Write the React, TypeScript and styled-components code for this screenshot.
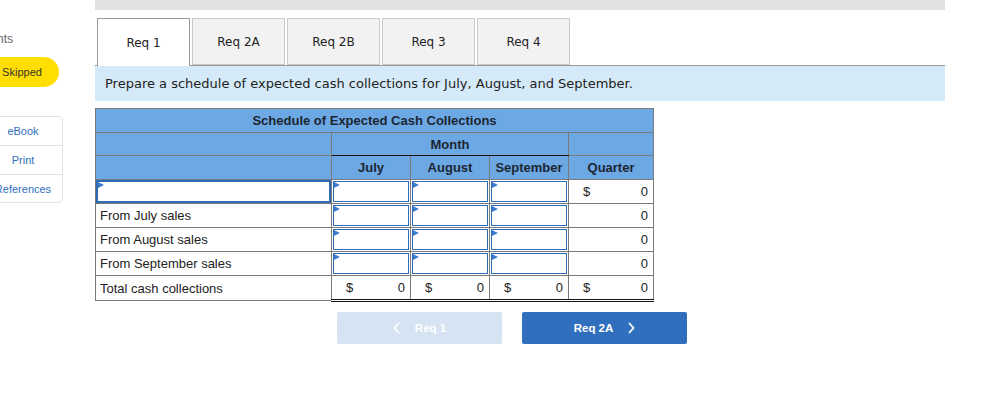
import React from 'react'
import styled, { createGlobalStyle } from 'styled-components'

const GlobalStyle = createGlobalStyle`
  html, body {
    margin: 0;
    padding: 0;
    background: #fff;
    overflow: hidden;
  }
  body {
    font-family: "Liberation Sans", Arial, sans-serif;
  }
`

const Page = styled.div`
  display: flex;
  width: 981px;
  height: 406px;
  overflow: hidden;
`

const Sidebar = styled.div`
  flex: 0 0 80px;
  min-width: 0;
  margin-left: -17px;
  padding-top: 32px;
  display: flex;
  flex-direction: column;
`

const Points = styled.div`
  font-size: 12px;
  color: #666;
  margin-left: -2px;
  height: 14px;
`

const SkippedPill = styled.div`
  margin-top: 11px;
  width: 76px;
  height: 30px;
  border-radius: 15px;
  background: #ffde00;
  color: #333;
  font-size: 11px;
  display: flex;
  align-items: center;
  justify-content: center;
  padding-left: 2px;
  box-sizing: border-box;
`

const LinkBox = styled.div`
  margin-top: 29px;
  width: 80px;
  box-sizing: border-box;
  border: 1px solid #e2e2e2;
  border-radius: 4px;
  display: flex;
  flex-direction: column;
`

const LinkItem = styled.div<{ last?: boolean }>`
  height: ${({ last }) => (last ? '27px' : '28px')};
  display: flex;
  align-items: center;
  justify-content: center;
  font-size: 11px;
  color: #2f6fbd;
  border-bottom: ${({ last }) => (last ? 'none' : '1px solid #e2e2e2')};
`

const Main = styled.div`
  margin-left: 32px;
  width: 850px;
  display: flex;
  flex-direction: column;
`

const TopBar = styled.div`
  height: 10px;
  background: #e1e1e1;
`

const TabRow = styled.div`
  margin-top: 8px;
  display: flex;
  gap: 2px;
  padding-left: 2px;
  border-bottom: 1px solid #9a9a9a;
  height: 47px;
`

const Tab = styled.div<{ active?: boolean }>`
  width: 93px;
  height: ${({ active }) => (active ? '48px' : '47px')};
  box-sizing: border-box;
  border: 1px solid ${({ active }) => (active ? '#9a9a9a' : '#c9c9c9')};
  border-bottom: ${({ active }) => (active ? 'none' : '1px solid #c9c9c9')};
  background: ${({ active }) => (active ? '#fff' : '#f2f2f2')};
  display: flex;
  align-items: center;
  justify-content: center;
  font-family: "DejaVu Sans", Verdana, sans-serif;
  font-size: 12px;
  color: #222;
  position: relative;
  z-index: 1;
`

const Instructions = styled.div`
  height: 35px;
  background: #d5eaf8;
  display: flex;
  align-items: center;
  padding-left: 10px;
  font-family: "DejaVu Sans", Verdana, sans-serif;
  font-size: 13px;
  color: #222;
`

const Schedule = styled.table`
  margin-top: 7px;
  width: 558px;
  border-collapse: collapse;
  table-layout: fixed;
  font-size: 13px;
  color: #222;
`

const HeadRow = styled.tr<{ h: number }>`
  height: ${({ h }) => h}px;
`

const BodyRow = styled.tr<{ h?: number }>`
  height: ${({ h }) => h ?? 24}px;
`

const HeadCell = styled.th<{ underline?: boolean }>`
  background: #6ca8e4;
  border: 1px solid #7a7a7a;
  border-bottom: ${({ underline }) => (underline ? '1px solid #111' : '1px solid #7a7a7a')};
  font-weight: bold;
  font-size: 13px;
  line-height: 15px;
  color: #1c2632;
  padding: 0;
  text-align: center;
`

const LabelCell = styled.td`
  border: 1px solid #7a7a7a;
  padding: 0 0 0 4px;
  line-height: 15px;
  white-space: nowrap;
`

const InputCell = styled.td<{ wide?: boolean }>`
  border: 1px solid #7a7a7a;
  padding: ${({ wide }) => (wide ? '0' : '1px')};
  line-height: 0;
`

const InputBox = styled.div<{ wide?: boolean }>`
  height: ${({ wide }) => (wide ? '23px' : '21px')};
  box-sizing: border-box;
  border: ${({ wide }) => (wide ? '2px' : '1.5px')} solid #2f6cb8;
  background: #fff;
  position: relative;
  &::before {
    content: '';
    position: absolute;
    left: 0;
    top: 0;
    border-left: 6px solid #3d7ccd;
    border-top: 3px solid transparent;
    border-bottom: 3px solid transparent;
  }
`

const AmountCell = styled.td<{ total?: boolean }>`
  border: 1px solid #7a7a7a;
  border-top: ${({ total }) => (total ? '1px solid #111' : '1px solid #7a7a7a')};
  border-bottom: ${({ total }) => (total ? '3px double #111' : '1px solid #7a7a7a')};
  line-height: 15px;
  padding: 0 5px 0 14px;
`

const Amount = styled.div`
  display: flex;
  justify-content: space-between;
`

const NavRow = styled.div`
  margin-top: 10px;
  display: flex;
  gap: 20px;
  padding-left: 242px;
`

const NavButton = styled.div<{ disabled?: boolean }>`
  width: 165px;
  height: 32px;
  border-radius: 2px;
  background: ${({ disabled }) => (disabled ? '#d6e3f3' : '#2f6fbd')};
  color: #fff;
  font-weight: bold;
  font-size: 11.5px;
  display: flex;
  align-items: center;
  justify-content: center;
  gap: 14px;
`

const Chevron = ({ dir }: { dir: 'left' | 'right' }) => (
  <svg width="8" height="12" viewBox="0 0 8 12">
    <path
      d={dir === 'left' ? 'M6 1 L1.5 6 L6 11' : 'M2 1 L6.5 6 L2 11'}
      fill="none"
      stroke="#fff"
      strokeWidth="1.8"
    />
  </svg>
)

const tabs = ['Req 1', 'Req 2A', 'Req 2B', 'Req 3', 'Req 4']
const salesRows = ['From July sales', 'From August sales', 'From September sales']

const Inputs = () => (
  <>
    <InputCell><InputBox /></InputCell>
    <InputCell><InputBox /></InputCell>
    <InputCell><InputBox /></InputCell>
  </>
)

const Money = ({ dollar, total }: { dollar?: boolean; total?: boolean }) => (
  <AmountCell total={total}>
    <Amount>
      <span>{dollar ? '$' : ''}</span>
      <span>0</span>
    </Amount>
  </AmountCell>
)

const App = () => {
  return (
    <Page>
      <GlobalStyle />
      <Sidebar>
        <Points>points</Points>
        <SkippedPill>Skipped</SkippedPill>
        <LinkBox>
          <LinkItem>eBook</LinkItem>
          <LinkItem>Print</LinkItem>
          <LinkItem last>References</LinkItem>
        </LinkBox>
      </Sidebar>
      <Main>
        <TopBar />
        <TabRow>
          {tabs.map((t, i) => (
            <Tab key={t} active={i === 0}>{t}</Tab>
          ))}
        </TabRow>
        <Instructions>
          Prepare a schedule of expected cash collections for July, August, and September.
        </Instructions>
        <Schedule>
          <colgroup>
            <col style={{ width: 236 }} />
            <col style={{ width: 79 }} />
            <col style={{ width: 79 }} />
            <col style={{ width: 79 }} />
            <col style={{ width: 85 }} />
          </colgroup>
          <thead>
            <HeadRow h={24}>
              <HeadCell colSpan={5}>Schedule of Expected Cash Collections</HeadCell>
            </HeadRow>
            <HeadRow h={23}>
              <HeadCell />
              <HeadCell colSpan={3} underline>Month</HeadCell>
              <HeadCell />
            </HeadRow>
            <HeadRow h={24}>
              <HeadCell />
              <HeadCell>July</HeadCell>
              <HeadCell>August</HeadCell>
              <HeadCell>September</HeadCell>
              <HeadCell>Quarter</HeadCell>
            </HeadRow>
          </thead>
          <tbody>
            <BodyRow>
              <InputCell wide><InputBox wide /></InputCell>
              <Inputs />
              <Money dollar />
            </BodyRow>
            {salesRows.map((r) => (
              <BodyRow key={r}>
                <LabelCell>{r}</LabelCell>
                <Inputs />
                <Money />
              </BodyRow>
            ))}
            <BodyRow h={25}>
              <LabelCell>Total cash collections</LabelCell>
              <Money dollar total />
              <Money dollar total />
              <Money dollar total />
              <Money dollar total />
            </BodyRow>
          </tbody>
        </Schedule>
        <NavRow>
          <NavButton disabled>
            <Chevron dir="left" />
            <span>Req 1</span>
          </NavButton>
          <NavButton>
            <span>Req 2A</span>
            <Chevron dir="right" />
          </NavButton>
        </NavRow>
      </Main>
    </Page>
  )
}

export default App
